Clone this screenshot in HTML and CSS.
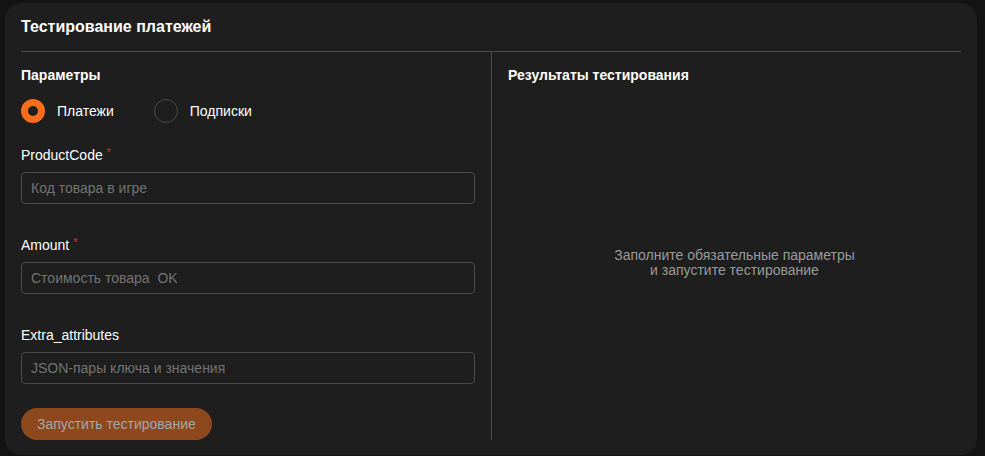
FILE: index.html
```html
<!DOCTYPE html>
<html lang="ru">
<head>
<meta charset="utf-8">
<title>Тестирование платежей</title>
<link rel="stylesheet" href="styles.css">
</head>
<body>
<div class="card">
  <div class="card-header">
    <h1 class="card-title">Тестирование платежей</h1>
  </div>
  <div class="card-body">
    <div class="col col-left">
      <h2 class="section-title">Параметры</h2>
      <div class="radio-group">
        <label class="radio radio-checked"><span class="radio-dot"></span><span class="radio-label">Платежи</span></label>
        <label class="radio"><span class="radio-dot"></span><span class="radio-label">Подписки</span></label>
      </div>
      <div class="field field-first">
        <div class="field-label">ProductCode <span class="req">*</span></div>
        <div class="input"><span class="placeholder">Код товара в игре</span></div>
      </div>
      <div class="field">
        <div class="field-label">Amount <span class="req">*</span></div>
        <div class="input"><span class="placeholder">Стоимость товара&nbsp; OK</span></div>
      </div>
      <div class="field">
        <div class="field-label">Extra_attributes</div>
        <div class="input"><span class="placeholder">JSON-пары ключа и значения</span></div>
      </div>
      <button class="btn" type="button">Запустить тестирование</button>
    </div>
    <div class="col col-right">
      <h2 class="section-title">Результаты тестирования</h2>
      <div class="empty">
        <p class="empty-text">Заполните обязательные параметры<br>и запустите тестирование</p>
      </div>
    </div>
  </div>
</div>
</body>
</html>
```
FILE: styles.css
```css
* { box-sizing: border-box; }
html, body { margin: 0; padding: 0; }
body {
  background: #131313;
  font-family: "Liberation Sans", Arial, sans-serif;
  color: #ffffff;
  width: 985px;
  height: 456px;
  overflow: hidden;
  padding: 3px 8px 0 5px;
}
.card {
  background: #1e1e1e;
  border-radius: 16px;
  height: 452px;
  padding: 0 16px 15px 16px;
  display: flex;
  flex-direction: column;
}
.card-header {
  padding: 14px 0 14px;
  border-bottom: 1px solid #4a4a4a;
}
.card-title {
  margin: 0;
  font-size: 16px;
  line-height: 20px;
  font-weight: 700;
}
.card-body {
  flex: 1;
  display: grid;
  grid-template-columns: 471px 1fr;
}
.col-left {
  border-right: 1px solid #4a4a4a;
  padding: 13px 16px 0 0;
  display: flex;
  flex-direction: column;
}
.col-right {
  padding: 13px 0 0 16px;
  display: flex;
  flex-direction: column;
}
.section-title {
  margin: 0;
  font-size: 14px;
  line-height: 20px;
  font-weight: 700;
}
.radio-group {
  display: flex;
  gap: 40px;
  margin-top: 14px;
}
.radio {
  display: flex;
  align-items: center;
  gap: 12px;
  font-size: 14px;
  line-height: 22px;
}
.radio-dot {
  width: 24px;
  height: 24px;
  border-radius: 50%;
  border: 1px solid #4a4a4a;
  background: #1e1e1e;
}
.radio-checked .radio-dot {
  border: 7px solid #f96d1d;
  background: #1e1e1e;
}
.field { margin-top: 31px; }
.field-first { margin-top: 22px; }
.field-label {
  font-size: 14px;
  line-height: 20px;
}
.req {
  color: #e5262b;
  font-size: 11px;
  vertical-align: top;
  line-height: 14px;
}
.input {
  margin-top: 7px;
  height: 32px;
  border: 1px solid #4a4a4a;
  border-radius: 4px;
  padding: 0 9px;
  display: flex;
  align-items: center;
}
.placeholder {
  color: #737373;
  font-size: 14px;
}
.btn {
  margin-top: 24px;
  align-self: flex-start;
  height: 32px;
  padding: 0 16px;
  border: none;
  border-radius: 16px;
  background: #8d481e;
  color: #a6a6a6;
  font-family: "Liberation Sans", Arial, sans-serif;
  font-size: 14px;
}
.empty {
  flex: 1;
  display: flex;
  align-items: center;
  justify-content: center;
}
.empty-text {
  margin: 0;
  text-align: center;
  color: #9a9a9a;
  font-size: 14px;
  line-height: 15px;
}
```
